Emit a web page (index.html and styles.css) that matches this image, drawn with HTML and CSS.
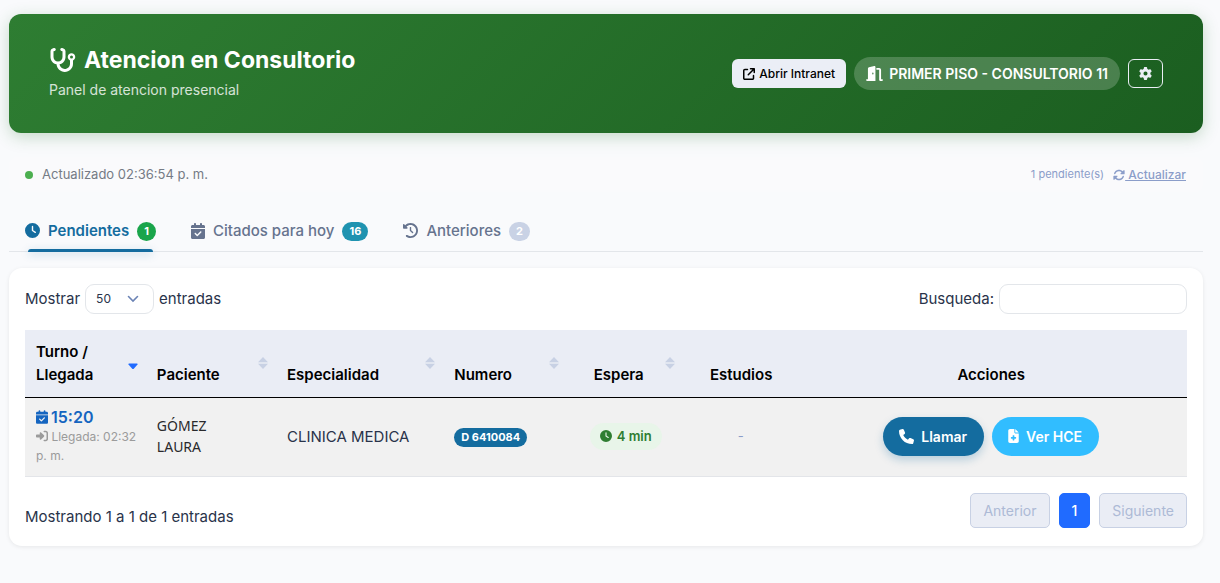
FILE: index.html
```html
<!DOCTYPE html>
<html lang="es">
<head>
<meta charset="utf-8">
<meta name="viewport" content="width=device-width, initial-scale=1">
<title>Atencion en Consultorio</title>
<link rel="stylesheet" href="styles.css">
</head>
<body>
<svg class="sprite" aria-hidden="true">
  <symbol id="i-stethoscope" viewBox="0 0 576 512"><path d="M142.4 21.9c5.6 16.8-3.5 34.9-20.2 40.5L96 71.1V192c0 53 43 96 96 96s96-43 96-96V71.1l-26.1-8.7c-16.8-5.6-25.8-23.7-20.2-40.5s23.7-25.8 40.5-20.2l26.1 8.7C334.4 19.1 352 43.5 352 71.1V192c0 77.2-54.6 141.6-127.3 156.7C231 404.6 278.4 448 336 448c61.9 0 112-50.1 112-112V265.3c-28.3-12.3-48-40.5-48-73.3c0-44.2 35.8-80 80-80s80 35.8 80 80c0 32.8-19.7 61-48 73.3V336c0 97.2-78.8 176-176 176c-92.9 0-168.9-71.9-175.5-163.1C87.2 334.2 32 269.6 32 192V71.1c0-27.5 17.6-52 43.8-60.7l26.1-8.7c16.8-5.6 34.9 3.5 40.5 20.2zM480 224a32 32 0 1 0 0-64 32 32 0 1 0 0 64z"/></symbol>
  <symbol id="i-external" viewBox="0 0 512 512"><path d="M320 0c-17.7 0-32 14.3-32 32s14.3 32 32 32h82.7L201.4 265.4c-12.5 12.5-12.5 32.8 0 45.3s32.8 12.5 45.3 0L448 109.3V192c0 17.7 14.3 32 32 32s32-14.3 32-32V32c0-17.7-14.3-32-32-32H320zM80 32C35.8 32 0 67.8 0 112V432c0 44.2 35.8 80 80 80H400c44.2 0 80-35.8 80-80V320c0-17.7-14.3-32-32-32s-32 14.3-32 32V432c0 8.8-7.2 16-16 16H80c-8.8 0-16-7.2-16-16V112c0-8.8 7.2-16 16-16H192c17.7 0 32-14.3 32-32s-14.3-32-32-32H80z"/></symbol>
  <symbol id="i-door" viewBox="0 0 576 512"><path d="M320 32c0-9.9-4.5-19.2-12.3-25.2S289.8-1.4 280.2 1l-179.9 45C79 51.3 64 70.5 64 92.5V448H32c-17.7 0-32 14.3-32 32s14.3 32 32 32H96 288h32V480 32zM256 256c0 17.7-10.7 32-24 32s-24-14.3-24-32s10.7-32 24-32s24 14.3 24 32zm96-128h96V480c0 17.7 14.3 32 32 32h64c17.7 0 32-14.3 32-32s-14.3-32-32-32H512V128c0-35.3-28.7-64-64-64H352v64z"/></symbol>
  <symbol id="i-gear" viewBox="0 0 512 512"><path d="M495.9 166.6c3.2 8.7 .5 18.4-6.4 24.6l-43.3 39.4c1.1 8.3 1.7 16.8 1.7 25.4s-.6 17.1-1.7 25.4l43.3 39.4c6.9 6.2 9.6 15.9 6.4 24.6c-4.4 11.9-9.7 23.3-15.8 34.3l-4.7 8.1c-6.6 11-14 21.4-22.1 31.2c-5.9 7.2-15.7 9.6-24.5 6.8l-55.7-17.7c-13.4 10.3-28.2 18.9-44 25.4l-12.5 57.1c-2 9.1-9 16.3-18.2 17.8c-13.8 2.3-28 3.5-42.5 3.5s-28.7-1.2-42.5-3.5c-9.2-1.5-16.2-8.7-18.2-17.8l-12.5-57.1c-15.8-6.5-30.6-15.1-44-25.4L83.1 425.9c-8.8 2.8-18.6 .3-24.5-6.8c-8.1-9.8-15.5-20.2-22.1-31.2l-4.7-8.1c-6.1-11-11.4-22.4-15.8-34.3c-3.2-8.7-.5-18.4 6.4-24.6l43.3-39.4C64.6 273.1 64 264.6 64 256s.6-17.1 1.7-25.4L22.4 191.2c-6.9-6.2-9.6-15.9-6.4-24.6c4.4-11.9 9.7-23.3 15.8-34.3l4.7-8.1c6.6-11 14-21.4 22.1-31.2c5.9-7.2 15.7-9.6 24.5-6.8l55.7 17.7c13.4-10.3 28.2-18.9 44-25.4l12.5-57.1c2-9.1 9-16.3 18.2-17.8C227.3 1.2 241.5 0 256 0s28.7 1.2 42.5 3.5c9.2 1.5 16.2 8.7 18.2 17.8l12.5 57.1c15.8 6.5 30.6 15.1 44 25.4l55.7-17.7c8.8-2.8 18.6-.3 24.5 6.8c8.1 9.8 15.5 20.2 22.1 31.2l4.7 8.1c6.1 11 11.4 22.4 15.8 34.3zM256 336a80 80 0 1 0 0-160 80 80 0 1 0 0 160z"/></symbol>
  <symbol id="i-sync" viewBox="0 0 512 512"><path id="sync-half" d="M142.9 142.9c62.2-62.2 162.7-62.5 225.3-1L327 183c-6.900 6.900-8.900 17.200-5.200 26.200s12.500 14.800 22.200 14.800H472c13.300 0 24-10.700 24-24V72c0-9.700-5.800-18.500-14.800-22.200s-19.300-1.700-26.200 5.200L413.400 96.600c-87.600-86.500-228.700-86.200-315.800 1C73.200 122 55.600 150.700 44.800 181.400c-5.900 16.700 2.900 34.900 19.500 40.800s34.900-2.900 40.800-19.500c7.700-21.800 20.200-42.300 37.800-59.800z"/><use href="#sync-half" transform="rotate(180 256 256)"/></symbol>
  <symbol id="i-clock" viewBox="0 0 512 512"><path d="M256 0a256 256 0 1 1 0 512A256 256 0 1 1 256 0zM232 120V256c0 8 4 15.500 10.700 20l96 64c11 7.400 25.900 4.400 33.300-6.700s4.400-25.900-6.700-33.300L280 243.200V120c0-13.300-10.700-24-24-24s-24 10.700-24 24z"/></symbol>
  <symbol id="i-calendar" viewBox="0 0 448 512"><path d="M128 0c17.700 0 32 14.300 32 32V64H288V32c0-17.700 14.300-32 32-32s32 14.300 32 32V64h48c26.500 0 48 21.500 48 48v48H0V112C0 85.500 21.500 64 48 64H96V32c0-17.700 14.300-32 32-32zM0 192H448V464c0 26.500-21.500 48-48 48H48c-26.500 0-48-21.500-48-48V192zM329 305c9.400-9.400 9.400-24.600 0-33.900s-24.600-9.400-33.900 0l-95 95-47-47c-9.400-9.400-24.600-9.400-33.900 0s-9.400 24.600 0 33.900l64 64c9.400 9.400 24.600 9.400 33.900 0L329 305z"/></symbol>
  <symbol id="i-history" viewBox="0 0 512 512"><path d="M75 75L41 41C25.900 25.900 0 36.600 0 57.900V168c0 13.300 10.700 24 24 24H134.100c21.400 0 32.100-25.900 17-41l-30.800-30.800C155 85.500 203 64 256 64c106 0 192 86 192 192s-86 192-192 192c-40.800 0-78.600-12.700-109.700-34.400c-14.500-10.100-34.400-6.600-44.600 7.900s-6.600 34.400 7.900 44.600C151.200 495 201.700 512 256 512c141.400 0 256-114.600 256-256S397.400 0 256 0C185.300 0 121.300 28.700 75 75zm181 53c-13.300 0-24 10.700-24 24V256c0 6.400 2.500 12.500 7 17l72 72c9.400 9.400 24.600 9.400 33.900 0s9.400-24.600 0-33.900l-65-65V152c0-13.300-10.700-24-24-24z"/></symbol>
  <symbol id="i-signin" viewBox="0 0 512 512"><path d="M217.900 105.900L340.700 228.700c7.200 7.200 11.300 17.100 11.300 27.300s-4.100 20.100-11.300 27.300L217.900 406.100c-6.400 6.400-15 9.900-24 9.900c-18.700 0-33.900-15.200-33.900-33.900l0-62.100L32 320c-17.700 0-32-14.300-32-32l0-64c0-17.700 14.300-32 32-32l128 0 0-62.100c0-18.700 15.200-33.900 33.900-33.900c9 0 17.600 3.600 24 9.900zM352 416l64 0c17.700 0 32-14.300 32-32l0-256c0-17.700-14.300-32-32-32l-64 0c-17.700 0-32-14.300-32-32s14.300-32 32-32l64 0c53 0 96 43 96 96l0 256c0 53-43 96-96 96l-64 0c-17.700 0-32-14.300-32-32s14.300-32 32-32z"/></symbol>
  <symbol id="i-phone" viewBox="0 0 512 512"><path d="M164.900 24.600c-7.700-18.600-28-28.500-47.400-23.200l-88 24C12.100 30.200 0 46 0 64C0 311.400 200.600 512 448 512c18 0 33.800-12.100 38.600-29.500l24-88c5.300-19.400-4.600-39.700-23.200-47.400l-96-40c-16.300-6.800-35.200-2.100-46.300 11.600L304.700 368C234.300 334.700 177.300 277.700 144 207.300L193.300 167c13.700-11.200 18.400-30 11.600-46.300l-40-96z"/></symbol>
  <symbol id="i-file" viewBox="0 0 384 512"><path d="M64 0C28.700 0 0 28.700 0 64V448c0 35.300 28.700 64 64 64H320c35.300 0 64-28.700 64-64V160H256c-17.700 0-32-14.300-32-32V0H64zM256 0V128H384L256 0zM160 240c0-8.800 7.200-16 16-16h32c8.800 0 16 7.200 16 16v48h48c8.800 0 16 7.200 16 16v32c0 8.800-7.200 16-16 16H224v48c0 8.800-7.200 16-16 16H176c-8.800 0-16-7.200-16-16V352H112c-8.800 0-16-7.200-16-16V304c0-8.800 7.200-16 16-16h48V240z"/></symbol>
  <symbol id="i-sort" viewBox="0 0 10 12"><path d="M5 0l5 5.300H0zM0 6.700h10L5 12z"/></symbol>
  <symbol id="i-sort-down" viewBox="0 0 10 12"><path d="M1 6.500h8q1 0 .5 1L6 11.500q-1 1-2 0L.5 7.500q-.5-1 .5-1z"/></symbol>
</svg>

<main class="page">
  <header class="hero">
    <div>
      <h1 class="hero-title"><svg class="icon icon-hero"><use href="#i-stethoscope"/></svg>Atencion en Consultorio</h1>
      <p class="hero-sub">Panel de atencion presencial</p>
    </div>
    <div class="hero-actions">
      <a class="btn-intranet" href="#"><svg class="icon icon-12"><use href="#i-external"/></svg>Abrir Intranet</a>
      <span class="room"><svg class="icon icon-room"><use href="#i-door"/></svg>PRIMER PISO - CONSULTORIO 11</span>
      <button class="btn-gear" type="button" aria-label="Configuracion"><svg class="icon icon-13"><use href="#i-gear"/></svg></button>
    </div>
  </header>

  <div class="status">
    <span class="status-time"><span class="dot"></span>Actualizado 02:36:54 p. m.</span>
    <span class="status-side">
      <span class="count">1 pendiente(s)</span>
      <a class="refresh" href="#"><svg class="icon icon-12"><use href="#i-sync"/></svg><span class="refresh-text">&nbsp;Actualizar</span></a>
    </span>
  </div>

  <nav class="tabs">
    <button class="tab tab-active" type="button"><svg class="icon icon-15"><use href="#i-clock"/></svg>Pendientes<span class="pill pill-green">1</span></button>
    <button class="tab" type="button"><svg class="icon icon-cal"><use href="#i-calendar"/></svg>Citados para hoy<span class="pill pill-teal">16</span></button>
    <button class="tab" type="button"><svg class="icon icon-15"><use href="#i-history"/></svg>Anteriores<span class="pill pill-gray">2</span></button>
  </nav>

  <section class="card">
    <div class="controls">
      <label class="control">Mostrar
        <select class="length"><option>50</option><option>100</option></select>
        entradas</label>
      <label class="control">Busqueda: <input class="search" type="search"></label>
    </div>

    <table class="grid">
      <colgroup><col class="c-turno"><col class="c-paciente"><col class="c-esp"><col class="c-num"><col class="c-espera"><col class="c-est"><col></colgroup>
      <thead>
        <tr>
          <th>Turno / Llegada<svg class="sort sort-on"><use href="#i-sort-down"/></svg></th>
          <th>Paciente<svg class="sort"><use href="#i-sort"/></svg></th>
          <th>Especialidad<svg class="sort"><use href="#i-sort"/></svg></th>
          <th>Numero<svg class="sort sort-inset"><use href="#i-sort"/></svg></th>
          <th>Espera<svg class="sort sort-inset"><use href="#i-sort"/></svg></th>
          <th>Estudios</th>
          <th class="center">Acciones</th>
        </tr>
      </thead>
      <tbody>
        <tr>
          <td>
            <div class="turno"><svg class="icon icon-turno"><use href="#i-calendar"/></svg>15:20</div>
            <div class="llegada"><svg class="icon icon-12"><use href="#i-signin"/></svg> Llegada: 02:32 p. m.</div>
          </td>
          <td><div class="paciente">GÓMEZ<br>LAURA</div></td>
          <td>CLINICA MEDICA</td>
          <td><span class="doc">D 6410084</span></td>
          <td class="cell-wait"><span class="wait"><svg class="icon icon-12"><use href="#i-clock"/></svg>4 min</span></td>
          <td class="none">-</td>
          <td>
            <div class="actions">
              <button class="act act-call" type="button"><svg class="icon icon-15"><use href="#i-phone"/></svg>Llamar</button>
              <button class="act act-view" type="button"><svg class="icon icon-file"><use href="#i-file"/></svg>Ver HCE</button>
            </div>
          </td>
        </tr>
      </tbody>
    </table>

    <div class="footer">
      <span class="info">Mostrando 1 a 1 de 1 entradas</span>
      <div class="pager">
        <button class="pg" type="button" disabled>Anterior</button>
        <button class="pg pg-on" type="button">1</button>
        <button class="pg" type="button" disabled>Siguiente</button>
      </div>
    </div>
  </section>
</main>
</body>
</html>
```
FILE: styles.css
```css
* { box-sizing: border-box; }

body {
  margin: 0;
  background: #f9fafc;
  color: #29334a;
  font: 15px/23px Inter, "Liberation Sans", sans-serif;
}

button, input, select { font: inherit; }
button { cursor: pointer; }

.sprite { position: absolute; width: 0; height: 0; }

.icon { flex: none; width: 14px; height: 14px; fill: currentColor; }
.icon-12 { width: 12px; height: 12px; }
.icon-13 { width: 13px; height: 13px; }
.icon-15 { width: 15px; height: 15px; }
.icon-cal { width: 14px; height: 16px; }
.icon-room { width: 17px; height: 15px; }
.icon-file { width: 11px; height: 14px; }
.icon-hero { width: 27px; height: 24px; }
.icon-turno { width: 12px; height: 14px; }

.page { padding: 14px 17px 24px 9px; }

.hero {
  display: flex;
  align-items: flex-start;
  justify-content: space-between;
  padding: 30px 40px 33px;
  border-radius: 12px;
  background: linear-gradient(135deg, #2e7d32, #1b5e20);
  box-shadow: 0 4px 16px rgba(46, 125, 50, 0.25);
  color: #fff;
}
.hero-title {
  display: flex;
  align-items: center;
  gap: 8px;
  margin: 0;
  font-size: 23px;
  line-height: 32px;
  font-weight: 700;
}
.hero-sub { margin: 3px 0 0; font-size: 14px; line-height: 21px; opacity: 0.8; }
.hero-actions { display: flex; align-items: center; gap: 8px; padding-top: 13px; }

.btn-intranet {
  display: flex;
  align-items: center;
  gap: 4px;
  padding: 5px 11px;
  border-radius: 6px;
  background: #ebeef6;
  color: #000;
  font-size: 12px;
  line-height: 19px;
  font-weight: 500;
  text-decoration: none;
}
.room {
  display: flex;
  align-items: center;
  gap: 6px;
  padding: 6px 12px;
  border-radius: 20px;
  background: rgba(255, 255, 255, 0.2);
  font-size: 14px;
  line-height: 21px;
  font-weight: 600;
}
.btn-gear {
  display: flex;
  align-items: center;
  padding: 7px 10px;
  height: 29px;
  border: 1px solid #ebeef6;
  border-radius: 6px;
  background: transparent;
  color: #ebeef6;
}

.status {
  display: flex;
  align-items: center;
  justify-content: space-between;
  margin-top: 24px;
  padding: 6px 17px 6px 16px;
  border-radius: 8px;
  background: #fafafc;
  font-size: 13px;
}
.status-time { display: flex; align-items: center; gap: 9px; color: #757b85; }
.dot { width: 8px; height: 8px; border-radius: 50%; background: #4caf50; }
.status-side { display: flex; align-items: center; gap: 9px; color: #8b9dc9; }
.count { font-size: 11px; }
.refresh { display: flex; align-items: center; color: inherit; font-size: 12px; font-weight: 500; text-decoration: none; }
.refresh-text { text-decoration: underline; }

.tabs {
  display: flex;
  gap: 3px;
  margin-top: 16px;
  border-bottom: 1px solid #e3e6ea;
}
.tab {
  position: relative;
  display: flex;
  align-items: center;
  gap: 8px;
  padding: 11px 16px 9px;
  border: 0;
  background: none;
  color: #66738e;
  font-weight: 500;
}
.tab-active { color: #146c9f; font-weight: 600; }
.tab-active::after {
  content: "";
  position: absolute;
  left: 19px;
  right: 19px;
  bottom: -1px;
  height: 3px;
  border-radius: 3px 3px 0 0;
  background: #146c9f;
  box-shadow: 0 2px 8px rgba(20, 108, 159, 0.3);
}
.pill {
  margin-top: 2px;
  padding: 0 7px;
  border-radius: 10px;
  color: #fff;
  font-size: 11px;
  line-height: 19px;
  font-weight: 700;
}
.pill-green { background: #1aa54b; }
.pill-teal { background: #1f93b0; }
.pill-gray { background: #c9d2e5; }

.card {
  margin-top: 16px;
  padding: 16px 16px 18px;
  border-radius: 13px;
  background: #fff;
  box-shadow: 0 1px 4px rgba(0, 0, 0, 0.08);
}
.controls { display: flex; justify-content: space-between; }
.control { display: flex; align-items: center; gap: 5px; line-height: 28px; }
.length {
  width: 69px;
  height: 30px;
  padding: 0 10px;
  border: 1px solid #e3e6ea;
  border-radius: 9px;
  appearance: none;
  background: #fff url("data:image/svg+xml,%3Csvg xmlns='http://www.w3.org/2000/svg' width='12' height='8' fill='none' stroke='%236b83b5' stroke-width='1.6' stroke-linecap='round'%3E%3Cpath d='M1.500 1.500L6 6l4.500-4.500'/%3E%3C/svg%3E") no-repeat right 14px center;
  color: #29334a;
  font-size: 12px;
}
.search { width: 188px; height: 30px; padding: 0 10px; border: 1px solid #e3e6ea; border-radius: 9px; background: #fff; }

.grid {
  width: 100%;
  margin-top: 16px;
  border-collapse: separate;
  border-spacing: 0;
  table-layout: fixed;
}
.c-turno { width: 10.4%; }
.c-paciente { width: 11.2%; }
.c-esp { width: 14.4%; }
.c-num { width: 12%; }
.c-espera { width: 10%; }
.c-est { width: 8.3%; }
.grid th {
  position: relative;
  padding: 10px 30px 11px 11px;
  border-bottom: 1px solid #000;
  background: #eaedf5;
  color: #000;
  font-weight: 600;
  text-align: left;
  vertical-align: bottom;
}
.grid th:nth-last-child(-n+2) { padding-right: 11px; }
.grid td { padding: 9px 8px 11px 11px; border-bottom: 1px solid #e3e5e9; background: #f1f1f1; vertical-align: middle; }
.grid .center { text-align: center; }
.sort { position: absolute; right: 8px; top: 27px; width: 10px; height: 12px; fill: #c8d1e4; }
.sort-on { fill: #206bff; }
.sort-inset { right: 24px; }

.turno { display: flex; align-items: center; gap: 3px; color: #1565c0; font-size: 16px; line-height: 20px; font-weight: 600; }
.llegada { color: #9b9b9b; font-size: 12px; line-height: 19px; }
.llegada .icon { vertical-align: -1px; }
.paciente { color: #29292c; font: 14px/21px "Noto Sans", sans-serif; }
.doc { display: inline-block; padding: 0 7px; border-radius: 10px; background: #146c9f; color: #fff; font-size: 11px; line-height: 19px; font-weight: 700; vertical-align: middle; }
.grid .cell-wait { padding-left: 7px; }
.wait { display: inline-flex; align-items: center; gap: 5px; padding: 3px 10px; border-radius: 14px; background: #e8f5e9; color: #2e7d32; font-size: 13px; line-height: 21px; font-weight: 600; vertical-align: middle; }
.grid .none { padding-right: 24px; color: #8b9dc9; font-size: 13px; text-align: center; }

.actions { display: flex; justify-content: center; gap: 8px; }
.grid td:last-child { padding-left: 8px; }
.act {
  display: flex;
  align-items: center;
  gap: 7px;
  padding: 9px 17px 9px 16px;
  border: 0;
  border-radius: 20px;
  color: #fff;
  font-size: 14px;
  line-height: 21px;
  font-weight: 600;
}
.act-call { background: #146c9f; box-shadow: 0 4px 8px rgba(20, 108, 159, 0.25); }
.act-view { background: #31bdff; }

.footer { display: flex; align-items: center; justify-content: space-between; margin-top: 16px; }
.info { padding-top: 12px; }
.pager { display: flex; gap: 9px; }
.pg {
  padding: 6px 12px;
  border: 1px solid #c8d1e4;
  border-radius: 5px;
  background: #eaedf5;
  color: #adbad6;
  font-size: 14px;
  line-height: 21px;
}
.pg-on { border-color: #206bff; background: #206bff; color: #fff; font-weight: 500; }
```
